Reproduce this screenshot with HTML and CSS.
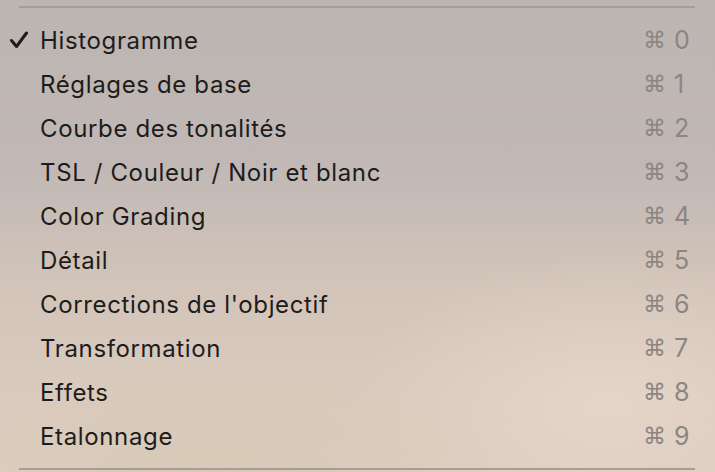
FILE: index.html
```html
<!DOCTYPE html>
<html lang="fr">
<head>
<meta charset="utf-8">
<link rel="stylesheet" href="styles.css">
</head>
<body>
<div class="menu">
  <div class="sep"></div>
  <ul class="items">
    <li class="item"><span class="check"><svg width="20" height="18" viewBox="0 0 20 18"><path d="M2.5 9.5 L7.5 15.5 L17.5 2" fill="none" stroke="#1d1d1d" stroke-width="3" stroke-linecap="round" stroke-linejoin="round"/></svg></span><span class="label">Histogramme</span><span class="key"><span class="cmd">⌘</span><span class="num">0</span></span></li>
    <li class="item"><span class="check"></span><span class="label">Réglages de base</span><span class="key"><span class="cmd">⌘</span><span class="num">1</span></span></li>
    <li class="item"><span class="check"></span><span class="label">Courbe des tonalités</span><span class="key"><span class="cmd">⌘</span><span class="num">2</span></span></li>
    <li class="item"><span class="check"></span><span class="label">TSL / Couleur / Noir et blanc</span><span class="key"><span class="cmd">⌘</span><span class="num">3</span></span></li>
    <li class="item"><span class="check"></span><span class="label">Color Grading</span><span class="key"><span class="cmd">⌘</span><span class="num">4</span></span></li>
    <li class="item"><span class="check"></span><span class="label">Détail</span><span class="key"><span class="cmd">⌘</span><span class="num">5</span></span></li>
    <li class="item"><span class="check"></span><span class="label">Corrections de l'objectif</span><span class="key"><span class="cmd">⌘</span><span class="num">6</span></span></li>
    <li class="item"><span class="check"></span><span class="label">Transformation</span><span class="key"><span class="cmd">⌘</span><span class="num">7</span></span></li>
    <li class="item"><span class="check"></span><span class="label">Effets</span><span class="key"><span class="cmd">⌘</span><span class="num">8</span></span></li>
    <li class="item"><span class="check"></span><span class="label">Etalonnage</span><span class="key"><span class="cmd">⌘</span><span class="num">9</span></span></li>
  </ul>
  <div class="sep sep-bottom"></div>
</div>
</body>
</html>
```
FILE: styles.css
```css
html, body {
  margin: 0;
  padding: 0;
  width: 715px;
  height: 472px;
  overflow: hidden;
}
body {
  font-family: Inter, "Noto Sans", sans-serif;
  background:
    radial-gradient(ellipse 60% 40% at 30% 100%, rgba(214, 200, 178, 0.7), rgba(214, 200, 178, 0) 70%),
    radial-gradient(ellipse 50% 45% at 85% 85%, rgba(232, 214, 202, 0.8), rgba(232, 214, 202, 0) 70%),
    linear-gradient(180deg, #bcb5b2 0%, #c1b8b5 35%, #d2c4b9 60%, #dacbbf 85%, #dccdc1 100%);
}
.menu {
  padding-top: 6px;
}
.sep {
  height: 2px;
  margin: 0 20px 0 19px;
  background: #a59d99;
}
.sep-bottom {
  margin-top: 10px;
}
.items {
  list-style: none;
  margin: 10px 0 0 0;
  padding: 0;
}
.item {
  height: 44px;
  display: flex;
  align-items: center;
  color: #1e1c1b;
  font-size: 24px;
  letter-spacing: 0.64px;
}
.check {
  width: 40px;
  display: flex;
  align-items: center;
  justify-content: flex-start;
  padding-left: 9px;
  box-sizing: border-box;
}
.check svg {
  display: block;
  margin-top: 0;
}
.label {
  flex: 1;
}
.key {
  width: 72px;
  display: flex;
  align-items: center;
  color: #8c8581;
  letter-spacing: 0;
}
.cmd {
  font-family: "DejaVu Sans", sans-serif;
  font-size: 23px;
  width: 31px;
}
.num {
  font-size: 25px;
}
```
